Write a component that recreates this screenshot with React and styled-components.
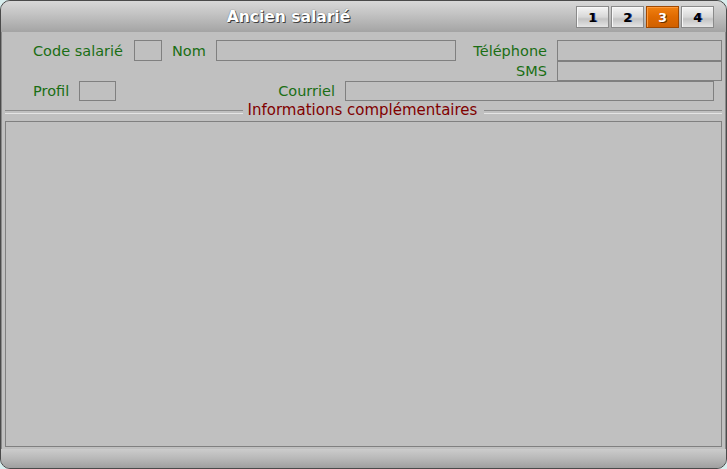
import React from "react";
import styled, { createGlobalStyle } from "styled-components";

const Global = createGlobalStyle`
  html, body { margin: 0; padding: 0; background: #d8eeee; }
  * { box-sizing: border-box; }
`;

const Window = styled.div`
  width: 727px;
  height: 469px;
  border: 1px solid #4a4a4a;
  border-radius: 10px;
  overflow: hidden;
  background: #c0c0c0;
  display: flex;
  flex-direction: column;
  font-family: "DejaVu Sans", Verdana, sans-serif;
  box-shadow: inset 1px 0 0 #8a8a8a, inset -1px 0 0 #8a8a8a;
`;

const TitleBar = styled.div`
  height: 31px;
  flex: none;
  display: flex;
  align-items: center;
  background: linear-gradient(#d8d8d8, #c4c4c4 40%, #a4a4a4);
  padding-right: 12px;
`;

const Title = styled.div`
  flex: 1;
  text-align: center;
  color: #ffffff;
  font-weight: bold;
  font-size: 15.5px;
  text-shadow: 1px 1px 0 #404040, 0 0 1px #505050;
  padding-top: 1px;
`;

const Tabs = styled.div`
  display: flex;
  gap: 2px;
  padding-top: 1px;
`;

const Tab = styled.div`
  width: 33px;
  height: 22px;
  display: flex;
  align-items: center;
  justify-content: center;
  font-weight: bold;
  font-size: 12.5px;
  border: 1px solid ${p => (p.$active ? "#a04800" : "#8a8a8a")};
  box-shadow: inset 1px 1px 0 ${p => (p.$active ? "#ff9a3a" : "#f8f8f8")};
  color: ${p => (p.$active ? "#ffffff" : "#000000")};
  text-shadow: ${p => (p.$active ? "1px 1px 0 #6a3000" : "1px 0 0 #3050a0")};
  background: ${p =>
    p.$active
      ? "linear-gradient(#f08010, #e06a00 50%, #d06000)"
      : "linear-gradient(#f4f4f4, #d8d8d8 50%, #c4c4c4 60%, #e4e4e4)"};
`;

const Body = styled.div`
  flex: 1;
  display: flex;
  flex-direction: column;
  padding-top: 8px;
`;

const Row = styled.div`
  display: flex;
  align-items: stretch;
  height: ${p => p.$h}px;
  padding-left: ${p => p.$pl || 0}px;
`;

const Label = styled.div`
  width: ${p => p.$w}px;
  flex: none;
  display: flex;
  align-items: center;
  justify-content: ${p => (p.$right ? "flex-end" : "flex-start")};
  padding-left: ${p => p.$pl || 0}px;
  padding-right: ${p => (p.$right ? 10 : 0)}px;
  color: #1a6e14;
  font-size: 14.5px;
  white-space: nowrap;
`;

const Input = styled.div`
  width: ${p => p.$w}px;
  flex: none;
  border: 1px solid #808080;
  background: #c0c0c0;
`;

const Separator = styled.div`
  height: 18px;
  display: flex;
  align-items: center;
  padding: 0 4px;
  gap: 5px;
  color: #800000;
  font-size: 15px;
  &::before, &::after {
    content: "";
    flex: 1;
    height: 2px;
    margin-top: 3px;
    border-top: 1px solid #8c8c8c;
    border-bottom: 1px solid #e4e4e4;
  }
  &::after { margin-left: 2px; }
`;

const Panel = styled.div`
  flex: 1;
  margin: 2px 4px 0 4px;
  border: 1px solid #808080;
  background: #c0c0c0;
`;

const BottomBar = styled.div`
  height: 19px;
  flex: none;
  margin-top: 2px;
  background: linear-gradient(#cccccc, #b8b8b8 50%, #a0a0a0);
`;

export default function App() {
  return (
    <>
      <Global />
      <Window>
        <TitleBar>
          <Title>Ancien salarié</Title>
          <Tabs>
            <Tab>1</Tab>
            <Tab>2</Tab>
            <Tab $active>3</Tab>
            <Tab>4</Tab>
          </Tabs>
        </TitleBar>
        <Body>
          <Row $h={21} $pl={32}>
            <Label $w={101}>Code salarié</Label>
            <Input $w={28} />
            <Label $w={54} $pl={10}>Nom</Label>
            <Input $w={240} />
            <Label $w={101} $right>Téléphone</Label>
            <Input $w={165} />
          </Row>
          <Row $h={20}>
            <Label $w={556} $right>SMS</Label>
            <Input $w={165} />
          </Row>
          <Row $h={20} $pl={32}>
            <Label $w={46}>Profil</Label>
            <Input $w={37} />
            <Label $w={229} $right>Courriel</Label>
            <Input $w={369} />
          </Row>
          <Separator>Informations complémentaires</Separator>
          <Panel />
          <BottomBar />
        </Body>
      </Window>
    </>
  );
}
